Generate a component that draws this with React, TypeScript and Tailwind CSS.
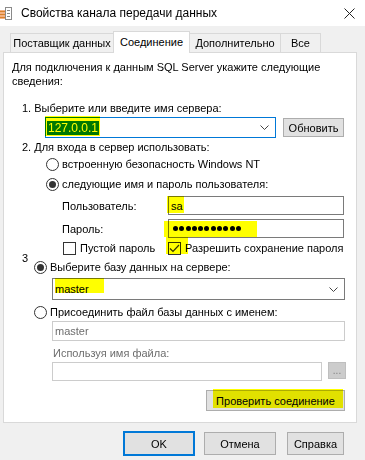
import React from "react";

function Radio({ checked, children }: { checked?: boolean; children: React.ReactNode }) {
  return (
    <div className="flex h-[16px] items-center">
      <span className="flex h-[13px] w-[13px] items-center justify-center rounded-full border border-[#333333] bg-white">
        {checked && <span className="h-[7px] w-[7px] rounded-full bg-[#333333]" />}
      </span>
      <span className="ml-[3px]">{children}</span>
    </div>
  );
}

function Checkbox({ checked }: { checked?: boolean }) {
  return (
    <span className="flex h-[13px] w-[13px] shrink-0 items-center justify-center border border-[#333333] bg-white">
      {checked && (
        <svg width="11" height="9" viewBox="0 0 11 9" fill="none">
          <path d="M1 4.5 L4 7.5 L10 1" stroke="#333333" strokeWidth="1.2" />
        </svg>
      )}
    </span>
  );
}

function Chevron() {
  return (
    <svg width="9" height="5" viewBox="0 0 9 5" fill="none" className="mr-[6px] ml-auto">
      <path d="M0.5 0.5 L4.5 4.5 L8.5 0.5" stroke="#444444" strokeWidth="1" />
    </svg>
  );
}

function Marker({ className }: { className: string }) {
  return <span className={"pointer-events-none absolute bg-[#ffff00] mix-blend-multiply " + className} />;
}

function TitleIcon() {
  return (
    <svg width="12" height="13" viewBox="0 0 12 13" className="mt-[1px]">
      <rect x="0" y="3" width="5" height="9" fill="#f4b183" />
      <rect x="0" y="4" width="5" height="1" fill="#d9822b" />
      <rect x="0" y="7" width="5" height="1" fill="#d9822b" />
      <rect x="0" y="10" width="5" height="1" fill="#d9822b" />
      <rect x="5.5" y="0.5" width="6" height="12" fill="#ffffff" stroke="#8a8a8a" />
      <rect x="7" y="3" width="3" height="1" fill="#8a8a8a" />
      <rect x="7" y="6" width="3" height="1" fill="#8a8a8a" />
      <rect x="7" y="9" width="3" height="1" fill="#8a8a8a" />
    </svg>
  );
}

export default function App() {
  return (
    <div className="flex h-[460px] w-[365px] flex-col overflow-hidden whitespace-nowrap bg-[#f0f0f0] font-['Liberation_Sans',Arial,sans-serif] text-[11px] leading-[14px] text-black">
      {/* title bar */}
      <div className="flex h-[26px] shrink-0 items-center bg-white">
        <TitleIcon />
        <span className="ml-[9px] text-[12px]">Свойства канала передачи данных</span>
        <svg width="11" height="11" viewBox="0 0 11 11" className="mr-[10px] ml-auto">
          <path d="M0.5 0.5 L10.5 10.5 M10.5 0.5 L0.5 10.5" stroke="#222222" strokeWidth="1" />
        </svg>
      </div>

      {/* tabs */}
      <div className="mt-[5px] ml-[10px] flex h-[21px] items-end">
        <div className="flex h-[19px] w-[104px] items-center justify-center border border-b-0 border-[#d9d9d9] bg-[#f0f0f0]">
          Поставщик данных
        </div>
        <div className="relative z-10 -mb-px -ml-px flex h-[22px] w-[77px] items-center justify-center border border-b-0 border-[#d9d9d9] bg-white pb-[2px]">
          Соединение
        </div>
        <div className="-ml-px flex h-[19px] w-[92px] items-center justify-center border border-b-0 border-[#d9d9d9] bg-[#f0f0f0]">
          Дополнительно
        </div>
        <div className="-ml-px flex h-[19px] w-[41px] items-center justify-center border border-b-0 border-[#d9d9d9] bg-[#f0f0f0]">
          Все
        </div>
      </div>

      {/* panel */}
      <div className="ml-[3px] flex h-[371px] w-[354px] shrink-0 flex-col border border-[#d9d9d9] bg-white">
        <p className="mt-[7px] pl-[8px]">
          Для подключения к данным SQL Server укажите следующие
          <br />
          сведения:
        </p>

        <div className="mt-[13px] ml-[18px] h-[14px]">1. Выберите или введите имя сервера:</div>

        <div className="mt-[2px] ml-[41px] flex h-[21px] items-center">
          <div className="relative flex h-[21px] w-[231px] items-center border border-[#0078d7] bg-white pl-[1px]">
            <span className="bg-[#0078d7] px-[1px] text-[12px] text-white">127.0.0.1</span>
            <Chevron />
            <Marker className="-top-[2px] -left-[1px] h-[20px] w-[55px]" />
          </div>
          <div className="ml-[7px] flex h-[19px] w-[61px] items-center justify-center border border-[#adadad] bg-[#e1e1e1]">
            Обновить
          </div>
        </div>

        <div className="mt-[2px] ml-[18px] h-[14px]">2. Для входа в сервер использовать:</div>

        <div className="mt-[2px] ml-[42px]">
          <Radio>встроенную безопасность Windows NT</Radio>
        </div>
        <div className="mt-[4px] ml-[42px]">
          <Radio checked>следующие имя и пароль пользователя:</Radio>
        </div>

        <div className="mt-[4px] flex h-[19px] items-center">
          <span className="ml-[58px] w-[106px]">Пользователь:</span>
          <div className="relative flex h-[19px] w-[176px] items-center border border-[#7a7a7a] bg-white pl-[2px]">
            sa
            <Marker className="-top-[1px] -left-[2px] h-[17px] w-[17px]" />
          </div>
        </div>

        <div className="mt-[4px] flex h-[19px] items-center">
          <span className="ml-[58px] w-[106px]">Пароль:</span>
          <div className="relative flex h-[19px] w-[176px] items-center gap-[1.3px] border border-[#7a7a7a] bg-white pl-[4px]">
            {Array.from({ length: 11 }).map((_, i) => (
              <span key={i} className="h-[5px] w-[5px] rounded-full bg-black" />
            ))}
            <Marker className="top-[1px] -left-[5px] h-[16px] w-[93px]" />
            <Marker className="top-[16px] -left-[3px] h-[18px] w-[22px]" />
          </div>
        </div>

        <div className="mt-[3px] flex h-[14px] items-center">
          <div className="ml-[59px] flex w-[105px] items-center">
            <Checkbox />
            <span className="ml-[4px]">Пустой пароль</span>
          </div>
          <Checkbox checked />
          <span className="ml-[4px]">Разрешить сохранение пароля</span>
        </div>

        <div className="-mt-[4px] ml-[18px] h-[8px]">3</div>

        <div className="ml-[30px]">
          <Radio checked>Выберите базу данных на сервере:</Radio>
        </div>

        <div className="mt-[3px] ml-[48px] flex">
          <div className="relative flex h-[22px] w-[293px] items-center border border-[#7a7a7a] bg-white pl-[2px]">
            master
            <Chevron />
            <Marker className="-top-[1px] left-[2px] h-[15px] w-[49px]" />
          </div>
        </div>

        <div className="mt-[4px] ml-[30px]">
          <Radio>Присоединить файл базы данных с именем:</Radio>
        </div>

        <div className="mt-[1px] ml-[48px] flex h-[20px] w-[293px] items-center border border-[#cccccc] bg-white pl-[2px] text-[#6d6d6d]">
          master
        </div>

        <div className="mt-[5px] ml-[49px] h-[14px] text-[#6d6d6d]">Используя имя файла:</div>

        <div className="mt-[2px] ml-[48px] flex items-start">
          <div className="h-[19px] w-[270px] border border-[#cccccc] bg-white" />
          <div className="ml-[6px] flex h-[17px] w-[18px] items-center justify-center border border-[#bfbfbf] bg-[#cccccc] text-[10px] text-[#838383]">
            ...
          </div>
        </div>

        <div className="mt-[9px] ml-[202px] flex">
          <div className="relative flex h-[21px] w-[139px] items-center justify-center border border-[#adadad] bg-[#e1e1e1]">
            Проверить соединение
            <Marker className="-top-[2px] left-[6px] h-[19px] w-[130px]" />
          </div>
        </div>
      </div>

      {/* dialog buttons */}
      <div className="mt-[8px] flex items-center">
        <div className="ml-[123px] flex h-[25px] w-[72px] items-center justify-center border-2 border-[#0078d7] bg-[#e1e1e1]">
          OK
        </div>
        <div className="ml-[9px] flex h-[23px] w-[72px] items-center justify-center border border-[#adadad] bg-[#e1e1e1]">
          Отмена
        </div>
        <div className="ml-[11px] flex h-[23px] w-[57px] items-center justify-center border border-[#adadad] bg-[#e1e1e1]">
          Справка
        </div>
      </div>
    </div>
  );
}
